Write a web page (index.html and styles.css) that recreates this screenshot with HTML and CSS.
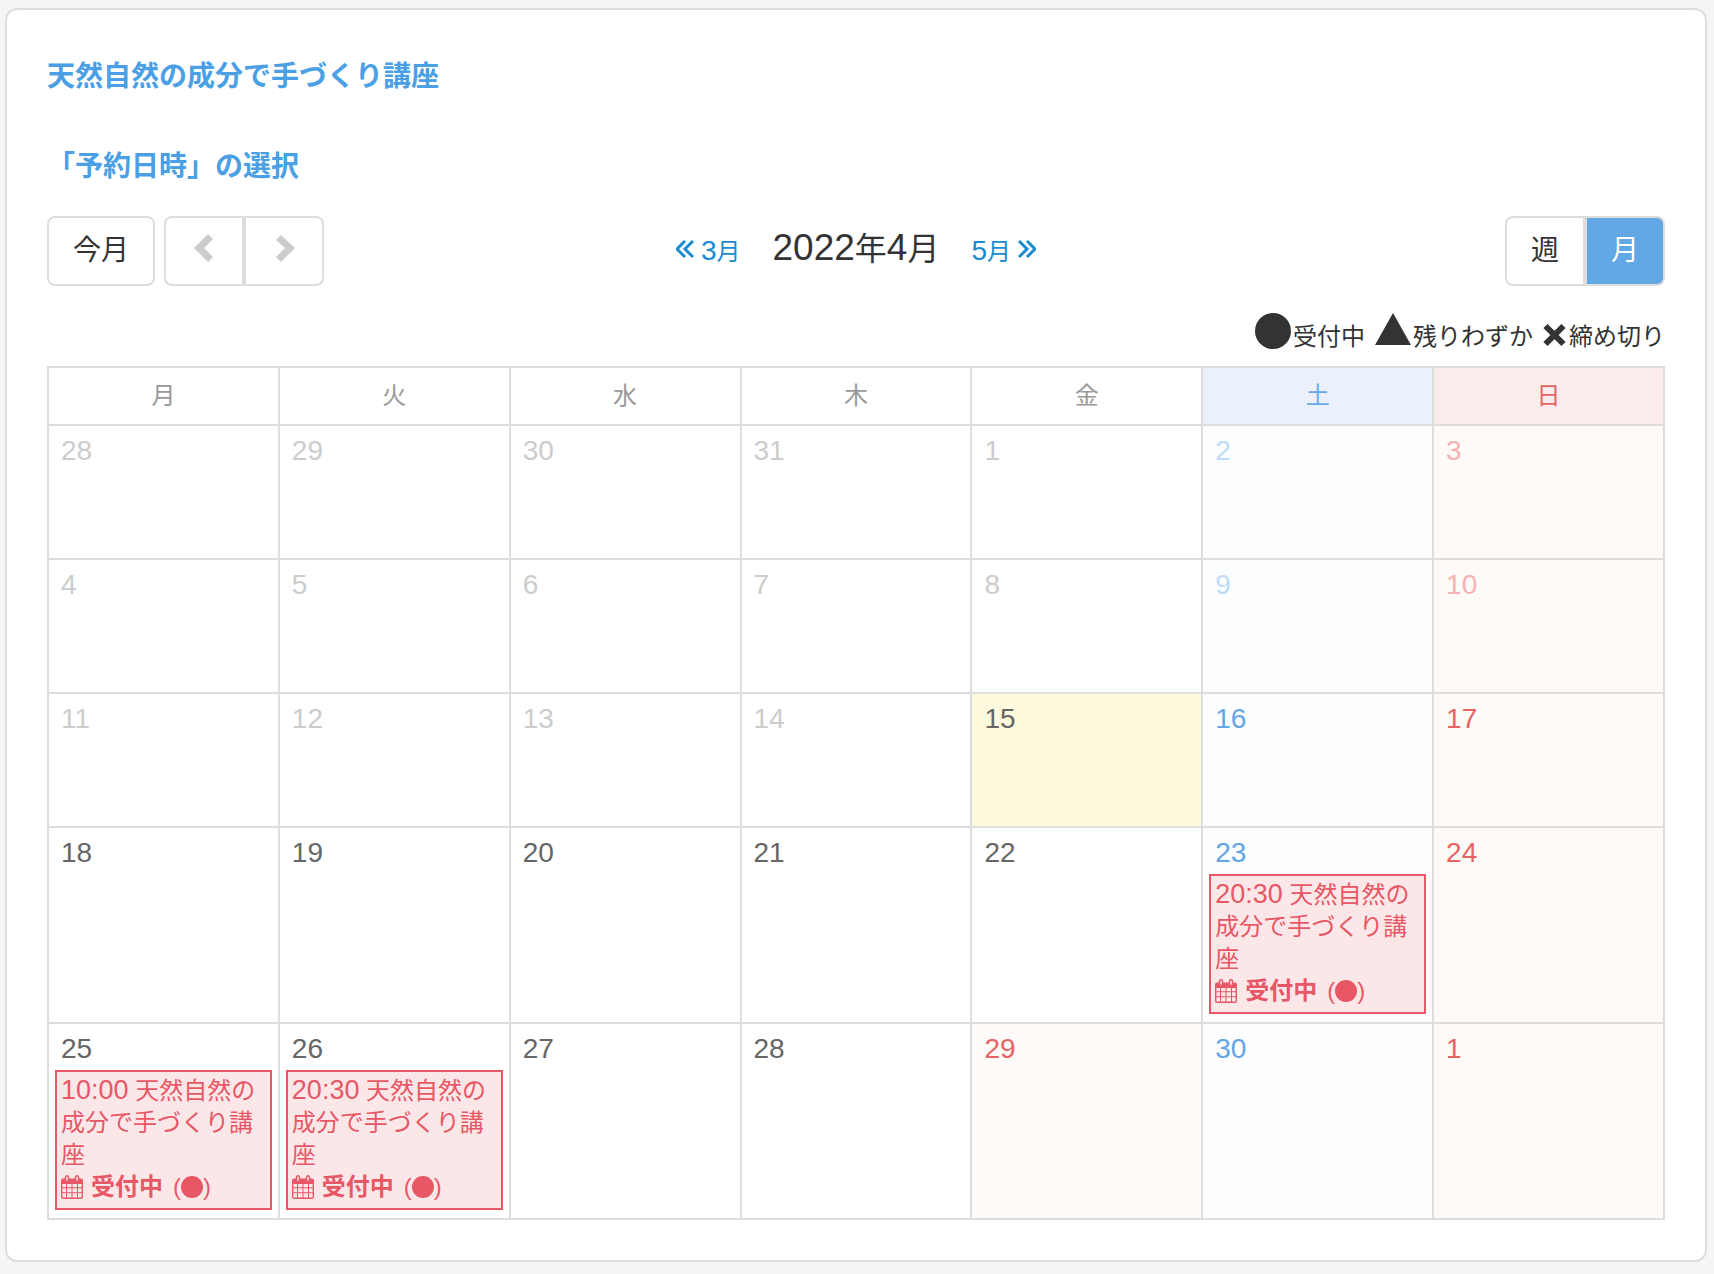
FILE: index.html
```
<!DOCTYPE html>
<html lang="ja">
<head>
  <meta charset="UTF-8">
  <meta name="viewport" content="width=device-width, initial-scale=1.0">
  <title>天然自然の成分で手づくり講座</title>
  <link rel="stylesheet" href="styles.css">
</head>
<body>
  <!-- shared icons -->
  <svg class="sprite" width="0" height="0" aria-hidden="true">
    <symbol id="icon-calendar" viewBox="0 0 22 24">
      <path fill="currentColor" fill-rule="evenodd" d="M2 3.5H20Q22 3.500 22 5.500V22Q22 24 20 24H2Q0 24 0 22V5.500Q0 3.500 2 3.500ZM1.400 9V12.300H5V9ZM6 9V12.300H10.500V9ZM11.500 9V12.300H16V9ZM17 9V12.300H20.600V9ZM1.400 13.300V17.300H5V13.300ZM6 13.300V17.300H10.500V13.300ZM11.500 13.300V17.300H16V13.300ZM17 13.300V17.300H20.600V13.300ZM1.400 18.300V22.600H5V18.300ZM6 18.300V22.600H10.500V18.300ZM11.500 18.300V22.600H16V18.300ZM17 18.300V22.600H20.600V18.300Z"/>
      <g class="ring">
        <rect x="4.500" y="0.700" width="3" height="5.800" rx="1.500"/>
        <rect x="14.500" y="0.700" width="3" height="5.800" rx="1.500"/>
      </g>
    </symbol>
    <symbol id="icon-circle" viewBox="0 0 36 36">
      <circle cx="18" cy="18" r="18" fill="currentColor"/>
    </symbol>
  </svg>

  <main class="card">
    <h1 class="heading">天然自然の成分で手づくり講座</h1>
    <h2 class="heading">「予約日時」の選択</h2>

    <div class="toolbar">
      <div class="toolbar-left">
        <button type="button" class="btn btn-today">今月</button>
        <div class="btn-group">
          <button type="button" class="btn btn-arrow" aria-label="前へ" disabled>
            <svg width="20" height="28" viewBox="0 0 20 28"><path d="M14 0L19 5L10 14L19 23L14 28L0 14Z" fill="currentColor"/></svg>
          </button>
          <button type="button" class="btn btn-arrow" aria-label="次へ" disabled>
            <svg width="22" height="28" viewBox="-2 0 22 28"><path d="M6 1L1 6L10 14L1 23L6 28L20 14Z" fill="currentColor"/></svg>
          </button>
        </div>
      </div>

      <div class="month-nav">
        <a href="#"><svg width="18" height="20" viewBox="0 0 18 20"><path d="M9 1L1 9L9 17M17 1L9 9L17 17"/></svg> <span class="num">3</span>月</a>
        <span class="month-title">2022<span class="kanji">年</span>4<span class="kanji">月</span></span>
        <a href="#"><span class="num">5</span>月 <svg width="18" height="20" viewBox="0 0 18 20"><path d="M1 1L9 9L1 17M9 1L17 9L9 17"/></svg></a>
      </div>

      <div class="btn-group toolbar-right">
        <button type="button" class="btn">週</button>
        <button type="button" class="btn btn-active">月</button>
      </div>
    </div>

    <div class="legend">
      <span class="legend-item"><svg width="36" height="36"><use href="#icon-circle"/></svg>受付中</span>
      <span class="legend-item"><svg width="36" height="36" viewBox="0 0 36 36"><path d="M18 0L36 32H0Z" fill="currentColor"/></svg>残りわずか</span>
      <span class="legend-item"><svg width="24" height="26" viewBox="0 0 24 26"><path d="M2.500 3L20.500 21M20.500 3L2.500 21" stroke="currentColor" stroke-width="6" fill="none"/></svg>締め切り</span>
    </div>

    <table class="calendar">
      <thead>
        <tr>
          <th>月</th>
          <th>火</th>
          <th>水</th>
          <th>木</th>
          <th>金</th>
          <th class="sat">土</th>
          <th class="sun">日</th>
        </tr>
      </thead>
      <tbody>
        <tr class="past">
          <td><div class="date">28</div></td>
          <td><div class="date">29</div></td>
          <td><div class="date">30</div></td>
          <td><div class="date">31</div></td>
          <td><div class="date">1</div></td>
          <td class="sat"><div class="date">2</div></td>
          <td class="sun"><div class="date">3</div></td>
        </tr>
        <tr class="past">
          <td><div class="date">4</div></td>
          <td><div class="date">5</div></td>
          <td><div class="date">6</div></td>
          <td><div class="date">7</div></td>
          <td><div class="date">8</div></td>
          <td class="sat"><div class="date">9</div></td>
          <td class="sun"><div class="date">10</div></td>
        </tr>
        <tr>
          <td class="off"><div class="date">11</div></td>
          <td class="off"><div class="date">12</div></td>
          <td class="off"><div class="date">13</div></td>
          <td class="off"><div class="date">14</div></td>
          <td class="today"><div class="date">15</div></td>
          <td class="sat"><div class="date">16</div></td>
          <td class="sun"><div class="date">17</div></td>
        </tr>
        <tr>
          <td><div class="date">18</div></td>
          <td><div class="date">19</div></td>
          <td><div class="date">20</div></td>
          <td><div class="date">21</div></td>
          <td><div class="date">22</div></td>
          <td class="sat">
            <div class="date">23</div>
            <a href="#" class="event">
              <span class="num">20:30</span> 天然自然の成分で手づくり講座
              <span class="status"><svg width="22" height="24"><use href="#icon-calendar"/></svg><b>受付中</b><span class="mark">(<svg width="22" height="22"><use href="#icon-circle"/></svg>)</span></span>
            </a>
          </td>
          <td class="sun"><div class="date">24</div></td>
        </tr>
        <tr class="last">
          <td>
            <div class="date">25</div>
            <a href="#" class="event">
              <span class="num">10:00</span> 天然自然の成分で手づくり講座
              <span class="status"><svg width="22" height="24"><use href="#icon-calendar"/></svg><b>受付中</b><span class="mark">(<svg width="22" height="22"><use href="#icon-circle"/></svg>)</span></span>
            </a>
          </td>
          <td>
            <div class="date">26</div>
            <a href="#" class="event">
              <span class="num">20:30</span> 天然自然の成分で手づくり講座
              <span class="status"><svg width="22" height="24"><use href="#icon-calendar"/></svg><b>受付中</b><span class="mark">(<svg width="22" height="22"><use href="#icon-circle"/></svg>)</span></span>
            </a>
          </td>
          <td><div class="date">27</div></td>
          <td><div class="date">28</div></td>
          <td class="sun"><div class="date">29</div></td>
          <td class="sat"><div class="date">30</div></td>
          <td class="sun"><div class="date">1</div></td>
        </tr>
      </tbody>
    </table>
  </main>
</body>
</html>
```

FILE: styles.css
```
body {
  margin: 8px 7px 8px 5px;
  background-color: #f5f5f5;
  color: #333;
  font-family: "Liberation Sans", "Noto Sans CJK JP", sans-serif;
  font-size: 24px;
}

a {
  text-decoration: none;
}

.sprite {
  position: absolute;
}

.card {
  padding: 42px 40px 40px;
  background-color: #fff;
  border: 2px solid #ddd;
  border-radius: 12px;
}

.heading {
  margin: 0 0 40px;
  color: #4a9fe5;
  font-size: 28px;
  line-height: 50px;
}

h2.heading {
  margin-bottom: 24px;
}

.num {
  font-size: 28px;
  line-height: 1;
}

/* Toolbar */
.toolbar {
  display: grid;
  grid-template-columns: 1fr auto 1fr;
  align-items: center;
}

.toolbar-left {
  display: flex;
  gap: 9px;
}

.toolbar-right {
  justify-self: end;
}

.btn {
  box-sizing: border-box;
  width: 80px;
  height: 70px;
  padding: 0 0 6px;
  background-color: #fff;
  color: #333;
  border: 2px solid #ddd;
  border-radius: 8px;
  font-family: inherit;
  font-size: 28px;
  cursor: pointer;
}

.btn-today {
  width: 108px;
}

.btn-arrow {
  color: #ccc;
}

.btn-arrow svg {
  display: block;
  margin: 0 auto;
}

.btn-group {
  display: flex;
}

.btn-group .btn:first-child {
  border-radius: 8px 0 0 8px;
}

.btn-group .btn:last-child {
  border-radius: 0 8px 8px 0;
}

.btn-active {
  background-color: #61a8e4;
  color: #fff;
}

.month-nav {
  display: flex;
  align-items: baseline;
  gap: 32px;
  padding-bottom: 6px;
}

.month-nav a {
  color: #1a8bd0;
}

.month-nav svg {
  fill: none;
  stroke: currentColor;
  stroke-width: 3;
}

.month-title {
  font-size: 37px;
  line-height: 44px;
}

.month-title .kanji {
  font-size: 32px;
}

/* Legend */
.legend {
  display: flex;
  justify-content: flex-end;
  gap: 10px;
  margin: 27px 0 17px;
  line-height: 24px;
}

.legend-item {
  display: flex;
  align-items: flex-end;
  gap: 2px;
}

/* Calendar */
.calendar {
  width: 100%;
  table-layout: fixed;
  border-collapse: collapse;
}

.calendar th,
.calendar td {
  padding: 0;
  border: 2px solid #ddd;
}

.calendar th {
  height: 56px;
  color: #999;
  font-weight: normal;
  line-height: 32px;
}

.calendar td {
  height: 132px;
  color: #666;
  vertical-align: top;
}

.calendar th.sat {
  background-color: #eaf1fd;
  color: #6aa8e8;
}

.calendar th.sun {
  background-color: #fbecec;
  color: #e56565;
}

.calendar td.sat {
  background-color: #fbfdff;
  color: #64a5e6;
}

.calendar td.sun {
  background-color: #fefaf8;
  color: #e56565;
}

.calendar td.today {
  background-color: #fdf9dc;
}

.calendar .past td,
.calendar td.off {
  color: #ccc;
}

.calendar .past td.sat {
  color: #c0dcf7;
}

.calendar .past td.sun {
  color: #f5b1b3;
}

.calendar .last td {
  height: 194px;
}

.date {
  padding: 4px 12px 0;
  font-size: 28px;
  line-height: 42px;
}

.event {
  display: block;
  margin: 0 6px 8px;
  padding: 3px 4px 5px;
  background-color: #fbe7e8;
  border: 2px solid #e85766;
  color: #e85766;
  line-height: 32px;
}

.event .num {
  font-size: 27px;
}

.status {
  display: flex;
  align-items: center;
  gap: 8px;
}

.mark {
  display: flex;
  align-items: center;
  padding-left: 2px;
}

.ring {
  fill: #fbe7e8;
  stroke: #e85766;
  stroke-width: 1.4;
}
```
